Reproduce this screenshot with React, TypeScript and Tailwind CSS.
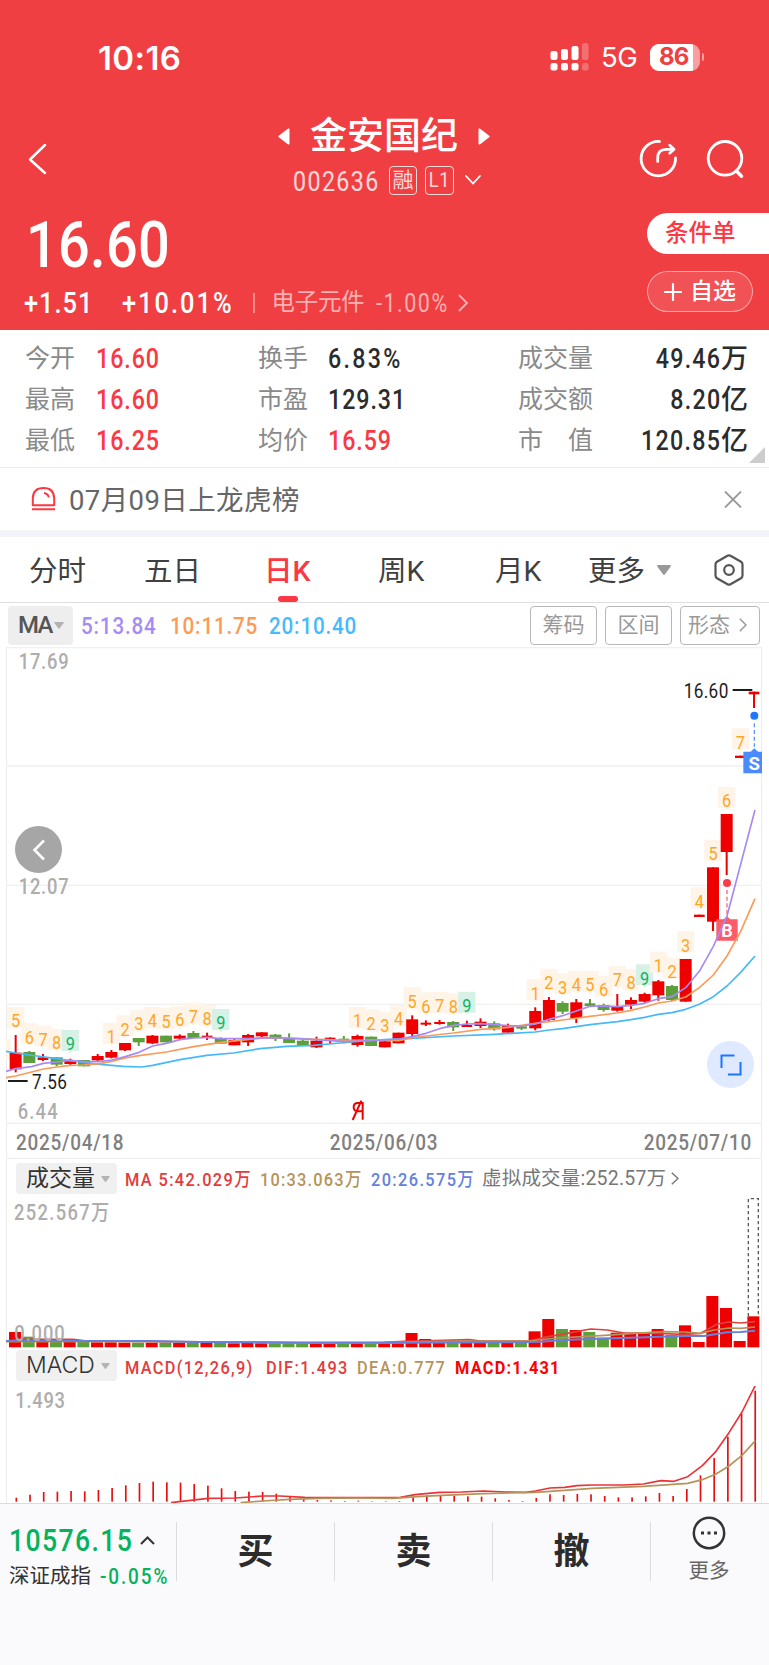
import type { ReactNode } from 'react';
import { twMerge } from 'tailwind-merge';
import clsx from 'clsx';

const UP = '#ee0000';
const DOWN = '#5c9f3a';

interface Candle {
  up: boolean;
  open: number;
  close: number;
  high: number;
  low: number;
  // top edge of the volume bar
  vol: number;
}

interface Mark {
  index: number;
  label: string;
  y: number;
}

const c = (up: number, open: number, close: number, high: number, low: number, vol: number): Candle => ({
  up: up === 1,
  open,
  close,
  high,
  low,
  vol,
});

// All the chart data is in canvas units, 3 units to a css pixel
const candles: Candle[] = [
  c(1, 458, 508, 405, 517, 546),
  c(0, 456, 489, 453, 489, 560),
  c(1, 472, 480, 462, 483, 574),
  c(0, 472, 494, 472, 498, 575),
  c(1, 483, 492, 476, 495, 576),
  c(0, 480, 499, 480, 499, 576),
  c(1, 468, 481, 462, 486, 577),
  c(1, 456, 473, 450, 475, 577),
  c(1, 429, 451, 429, 453, 578),
  c(0, 414, 427, 414, 438, 578),
  c(1, 407, 430, 405, 432, 578),
  c(0, 407, 427, 407, 427, 578),
  c(1, 407, 416, 403, 420, 579),
  c(0, 399, 414, 393, 414, 578),
  c(1, 407, 412, 398, 420, 579),
  c(0, 414, 431, 412, 431, 579),
  c(1, 420, 436, 414, 436, 580),
  c(1, 405, 427, 402, 438, 579),
  c(1, 397, 409, 397, 411, 580),
  c(0, 404, 417, 402, 423, 580),
  c(0, 416, 429, 400, 429, 580),
  c(0, 422, 438, 414, 438, 581),
  c(1, 422, 442, 410, 444, 581),
  c(1, 413, 420, 412, 432, 581),
  c(0, 416, 421, 408, 430, 581),
  c(1, 408, 435, 404, 440, 580),
  c(0, 410, 438, 410, 438, 581),
  c(1, 424, 442, 424, 442, 580),
  c(1, 398, 430, 398, 430, 580),
  c(1, 358, 402, 346, 410, 549),
  c(1, 368, 374, 361, 378, 567),
  c(1, 366, 372, 360, 374, 576),
  c(0, 366, 382, 363, 393, 576),
  c(1, 375, 381, 362, 381, 577),
  c(1, 365, 378, 355, 384, 577),
  c(0, 370, 388, 364, 392, 577),
  c(1, 376, 398, 371, 398, 578),
  c(0, 379, 386, 375, 390, 578),
  c(1, 333, 385, 322, 391, 544),
  c(1, 300, 360, 291, 365, 507),
  c(0, 309, 335, 304, 342, 537),
  c(1, 307, 354, 297, 369, 540),
  c(0, 310, 318, 297, 321, 546),
  c(0, 315, 330, 311, 335, 563),
  c(1, 320, 332, 282, 335, 548),
  c(1, 300, 314, 292, 327, 551),
  c(1, 282, 305, 278, 308, 552),
  c(1, 244, 286, 240, 302, 537),
  c(0, 258, 300, 255, 303, 555),
  c(1, 177, 305, 177, 305, 526),
  c(1, 44, 51, 44, 51, 576),
  c(1, -98, 65, -98, 93, 438),
  c(1, -258, -144, -258, -75, 474),
  c(1, -433, -426, -433, -426, 573),
  c(1, -625, -617, -625, -576, 499),
];

// The nine-turn sequence counters printed above the candles
const marks: Mark[] = [
  [-1, '4', 457], [0, '5', 361], [1, '6', 411], [2, '7', 418], [3, '8', 428], [4, '9', 431],
  [7, '1', 409], [8, '2', 387], [9, '3', 371], [10, '4', 362], [11, '5', 365], [12, '6', 359],
  [13, '7', 349], [14, '8', 355], [15, '9', 368],
  [25, '1', 362], [26, '2', 369], [27, '3', 376], [28, '4', 356], [29, '5', 303], [30, '6', 318],
  [31, '7', 316], [32, '8', 320], [33, '9', 316],
  [38, '1', 279], [39, '2', 247], [40, '3', 261], [41, '4', 253], [42, '5', 254], [43, '6', 268],
  [44, '7', 238], [45, '8', 248], [46, '9', 234],
  [47, '1', 196], [48, '2', 214], [49, '3', 135], [50, '4', 3], [51, '5', -140], [52, '6', -298], [53, '7', -474],
].map(([index, label, y]) => ({ index, label, y }) as Mark);

const MA5 =
  '18,514 47,506 95,500 130,490 170,486 211,481 252,485 300,485 335,480 376,470 417,457 458,438 499,430 540,419 581,414 622,412 663,416 740,416 820,413 900,416 990,422 1035,425 1152,420 1196,417 1237,410 1278,400 1319,386 1360,376 1402,372 1442,371 1483,374 1524,377 1565,378 1606,372 1647,358 1688,347 1729,333 1770,319 1811,318 1852,320 1893,316 1934,310 1975,296 2016,290 2057,263 2098,214 2140,139 2181,48 2222,-107 2265,-270';
const MA10 =
  '18,533 47,528 130,507 170,501 211,496 252,495 300,491 335,484 376,474 417,467 499,456 581,440 663,427 740,419 800,413 870,415 950,418 1050,421 1152,420 1196,422 1237,413 1278,408 1360,399 1442,388 1524,382 1606,370 1688,360 1770,349 1852,339 1893,331 1934,321 1975,309 2016,303 2057,291 2098,263 2140,225 2181,168 2222,94 2265,-4';
const MA20 =
  '18,454 47,459 88,465 170,476 240,486 300,493 370,499 425,501 458,496 540,479 620,466 700,459 780,446 860,439 940,436 1020,429 1100,422 1152,419 1237,415 1360,408 1483,403 1606,396 1647,390 1688,386 1770,374 1852,365 1893,359 1934,352 1975,343 2016,338 2057,328 2098,313 2140,290 2181,258 2222,217 2265,168';

const VOL5 =
  '18,573 60,568 220,568 260,573 600,576 900,578 1152,577 1212,574 1332,571 1407,569 1442,573 1592,573 1632,562 1697,551 1772,537 1822,540 1872,549 1932,549 2052,553 2102,550 2152,522 2187,516 2222,519 2265,515';
const VOL10 =
  '18,575 450,574 900,578 1152,578 1332,574 1582,573 1672,564 1802,557 1892,551 1992,545 2052,546 2102,550 2142,540 2187,534 2222,535 2265,531';
const VOL20 =
  '18,573 450,573 600,576 900,578 1152,578 1552,577 1622,575 1688,570 1792,566 1892,563 1982,560 2057,558 2112,558 2182,547 2222,546 2265,542';

const macdTops = [
  383, 374, 366, 365, 363, 364, 360, 354, 346, 339, 335, 337, 338, 342, 347, 355, 363, 365, 366, 371, 380, 388, 390,
  391, 393, 392, 393, 393, 393, 382, 376, 375, 378, 379, 380, 385, 390, 393, 384, 373, 375, 372, 373, 378, 382, 382,
  379, 369, 378, 357, 316, 264, 200, 131, 62,
];
const DIF =
  '513,398 545,394 625,385 707,384 788,378 840,378 914,382 1076,383 1201,382 1245,374 1319,367 1385,366 1451,363 1518,366 1577,367 1606,363 1650,354 1694,352 1731,347 1776,345 1871,345 1930,342 1982,332 2022,334 2063,320 2107,287 2148,244 2187,188 2226,126 2266,46';
const DEA =
  '722,398 788,393 869,388 958,385 1083,384 1179,385 1252,380 1326,376 1451,371 1606,367 1694,361 1776,355 1930,349 2063,340 2107,329 2148,312 2187,288 2226,256 2266,212';

const candleX = (i: number) => 47 + i * 41.02;

function Line({ points, color, width = 5 }: { points: string; color: string; width?: number }) {
  return <polyline points={points} fill="none" stroke={color} strokeWidth={width} strokeLinejoin="round" />;
}

// Condensed figures inside a chart, width is the drawn width
function Figure({ x, y, width, children }: { x: number; y: number; width: number; children: string }) {
  return (
    <text transform={`translate(${x} ${y}) scale(.86 1)`} textLength={width / 0.86}>
      {children}
    </text>
  );
}

// Condensed figures in the page
function Num({ children, className }: { children: ReactNode; className?: string }) {
  return (
    <span className={twMerge('inline-block origin-left scale-x-[.86] tracking-[0.04em]', className)}>{children}</span>
  );
}

function KLineChart() {
  return (
    <svg viewBox="18 -759 2268 1431" className="-mx-px block h-[477px] w-[756px]" fontFamily="Roboto, sans-serif">
      {[-757, -402, -44, 313, 670].map((y) => (
        <line key={y} x1="18" x2="2286" y1={y} y2={y} stroke="#f0f0f0" strokeWidth="4" />
      ))}
      <g fill="#adadad" fontSize="64" fontWeight="500">
        <Figure x={56} y={-692} width={150}>17.69</Figure>
        <Figure x={56} y={-17} width={150}>12.07</Figure>
        <Figure x={53} y={656} width={120}>6.44</Figure>
      </g>

      {marks.map(({ index, label, y }) => {
        const x = candleX(index);
        const nine = label === '9';
        return (
          <g key={index}>
            <path d={`M${x - 26} ${y - 41}h52v63h-20l-6 7l-6-7h-20z`} fill={nine ? '#d6f1e5' : '#fff4e8'} />
            <text
              transform={`translate(${x} ${y + 20}) scale(.86 1)`}
              textAnchor="middle"
              fontSize="57"
              fill={nine ? '#0fb264' : '#ffa525'}
            >
              {label}
            </text>
          </g>
        );
      })}

      {candles.map(({ up, open, close, high, low }, i) => {
        const x = candleX(i);
        // one-price days are drawn as a short dash
        const w = close - open < 9 ? 32 : 36;
        return (
          <g key={i} fill={up ? UP : DOWN}>
            <rect x={x - w / 2} y={open} width={w} height={close - open} />
            <rect x={x - 3} y={high} width="6" height={low - high} />
          </g>
        );
      })}

      {/* buy and sell points */}
      <g>
        <circle cx="2181" cy="-51" r="12" fill="#fa3b48" />
        <line x1="2181" x2="2181" y1="-30" y2="50" stroke="#fa6a74" strokeWidth="4" strokeDasharray="12 8" />
        <path d="M2149 58h22l10-9l10 9h22v64h-64z" fill="#fb5c67" />
        <text x="2181" y="110" textAnchor="middle" fontSize="54" fontWeight="700" fill="#fff">B</text>
        <circle cx="2263" cy="-553" r="12" fill="#1f75ff" />
        <line x1="2263" x2="2263" y1="-530" y2="-460" stroke="#5a98ff" strokeWidth="4" strokeDasharray="12 8" />
        <path d="M2230 -445h22l11-10l11 10h12v65h-56z" fill="#4a8cff" />
        <text x="2263" y="-391" textAnchor="middle" fontSize="56" fontWeight="700" fill="#fff">S</text>
      </g>

      <Line points={MA20} color="#45b9fb" />
      <Line points={MA10} color="#fb9b5a" />
      <Line points={MA5} color="#a68bf3" />

      <g fill="#1c1c1c" fontSize="60">
        <Figure x={2051} y={-606} width={134}>16.60</Figure>
        <rect x="2198" y="-633" width="59" height="6" />
        <Figure x={96} y={566} width={105}>7.56</Figure>
        <rect x="24" y="540" width="59" height="6" />
      </g>

      {/* ex-rights marker */}
      <g fill="none" stroke={UP} strokeWidth="6">
        <path d="M1088 659V606M1088 634H1072q-11-1-11-12q0-13 13-13h14M1058 660l26-58" />
      </g>
    </svg>
  );
}

function VolumeChart() {
  return (
    <svg viewBox="18 144 2268 456" className="-mx-px block h-[152px] w-[756px]" fontFamily="Roboto, 'Noto Sans CJK SC', sans-serif">
      {candles.map(({ up, vol }, i) => (
        <rect key={i} x={candleX(i) - 20} y={vol} width="36" height={592 - vol} fill={up ? UP : DOWN} />
      ))}
      <path d="M2245 499V146H2275V499" fill="none" stroke="#5a5a5a" strokeWidth="4" strokeDasharray="10 8" />
      <Line points={VOL5} color="#e0403c" />
      <Line points={VOL10} color="#b6935a" />
      <Line points={VOL20} color="#6680e0" width={6} />
      <g fill="#adadad" fontSize="64" fontWeight="500">
        <Figure x={42} y={211} width={286}>252.567万</Figure>
        <Figure x={43} y={572} width={151}>0.000</Figure>
      </g>
    </svg>
  );
}

function MacdChart() {
  return (
    <svg viewBox="18 48 2268 351" className="-mx-px block h-[117px] w-[756px]" fontFamily="Roboto, sans-serif">
      {macdTops.map((top, i) => (
        <rect
          key={i}
          x={46.5 + i * 41.05}
          y={top}
          width="5"
          height={395 - top}
          fill={i === 26 || i === 27 ? DOWN : '#e90d0d'}
        />
      ))}
      <Line points={DIF} color="#ea3338" />
      <Line points={DEA} color="#b6935a" />
      <g fill="#adadad" fontSize="64" fontWeight="500">
        <Figure x={46} y={113} width={149}>1.493</Figure>
      </g>
    </svg>
  );
}

function Caret({ className }: { className?: string }) {
  return (
    <svg viewBox="0 0 14 10" className={className} fill="currentColor">
      <path d="M1 0h12a1 1 0 0 1 .7 1.6L7.8 9.4a1 1 0 0 1-1.6 0L.3 1.6A1 1 0 0 1 1 0z" />
    </svg>
  );
}

interface QuoteProps {
  label: string;
  value: string;
  unit?: string;
  red?: boolean;
}

function Quote({ label, value, unit, red }: QuoteProps) {
  return (
    <div className={clsx('flex h-[41px] items-center', unit && 'justify-between')}>
      <span className="pt-[1px] text-[25px] text-[#8a8a8a]">{label}</span>
      <span className={clsx('flex pt-[4px] text-[27px] font-medium', red ? 'text-[#fb3843]' : 'text-[#2c2c2c]')}>
        <Num className={clsx(unit && 'origin-right tracking-[0.055em]', value.endsWith('%') && 'tracking-[0.1em]')}>
          {value}
        </Num>
        {unit}
      </span>
    </div>
  );
}

function IndicatorPill({ children }: { children: ReactNode }) {
  return (
    <div className="flex h-[31px] w-[101px] shrink-0 items-center justify-between rounded bg-[#f0f0f0] pr-[7px] pl-[10px] text-[23px] text-[#333]">
      {children}
      <Caret className="h-[6px] w-[9px] text-[#b3b3b3]" />
    </div>
  );
}

function Header() {
  return (
    <header className="h-[330px] bg-[#f03f42] text-white">
      {/* status bar */}
      <div className="flex h-[114px] items-center pl-[98px]">
        <span className="w-[452px] pt-[2px] font-[Inter] text-[33px] font-semibold tracking-[0.4px]">10:16</span>
        <svg className="h-[28px] w-[39px]" viewBox="0 0 39 28" fill="#fff">
          <rect x="0.5" y="8" width="7" height="9" rx="2.2" />
          <rect x="11" y="6" width="7" height="11" rx="2.2" />
          <rect x="21.5" y="3" width="7" height="14" rx="2.2" />
          <rect x="0.5" y="20" width="7" height="7.5" rx="2.2" />
          <rect x="11" y="20" width="7" height="7.5" rx="2.2" />
          <rect x="21.5" y="20" width="7" height="7.5" rx="2.2" />
          <rect x="32" y="0" width="6.5" height="17" rx="2.2" opacity=".25" />
          <rect x="32" y="20" width="6.5" height="7.5" rx="2.2" opacity=".25" />
        </svg>
        <span className="ml-[12px] w-[49px] pt-[2px] font-[Inter] text-[27.500px] tracking-[-0.4px]">5G</span>
        <div className="relative flex h-[27px] w-[50px] items-center overflow-hidden rounded-[9px] bg-white/50 pl-[9px]">
          <div className="absolute inset-y-0 left-0 w-[43px] bg-white" />
          <span className="relative font-[Inter] text-[24px] font-bold tracking-[-0.8px] text-[#f03f42]">86</span>
        </div>
        <div className="ml-[2px] h-[8px] w-[2px] rounded-r bg-white/50" />
      </div>

      {/* title row */}
      <div className="flex h-[92px] items-start pr-[24px] pl-[28px]">
        <svg className="mt-[28px] h-[34px] w-[20px]" viewBox="0 0 20 34" fill="none" stroke="#fff" strokeWidth="2.5" strokeLinecap="round" strokeLinejoin="round">
          <path d="M17 3L2 17.500L17 31" />
        </svg>
        <div className="ml-[230px] flex w-[212px] flex-col items-center">
          <div className="flex h-[44px] w-full items-center justify-between">
            <svg className="h-[17px] w-[12px]" viewBox="0 0 12 17" fill="#fff">
              <path d="M11.500 1.500v14a1 1 0 0 1-1.700.700L.8 9.300a1 1 0 0 1 0-1.500L9.800.800a1 1 0 0 1 1.700.700z" />
            </svg>
            <h1 className="text-[37px] leading-none font-medium">金安国纪</h1>
            <svg className="h-[17px] w-[12px]" viewBox="0 0 12 17" fill="#fff">
              <path d="M.5 1.500v14a1 1 0 0 0 1.700.700L11.200 9.300a1 1 0 0 0 0-1.500L2.200.800a1 1 0 0 0-1.700.700z" />
            </svg>
          </div>
          <div className="mt-[7px] flex h-[30px] w-full items-center pl-[15px] text-white/80">
            <span className="w-[96px] shrink-0 pt-[4px] text-[27px]">
              <Num className="tracking-[0.06em]">002636</Num>
            </span>
            <span className="flex h-[29px] w-[28px] shrink-0 items-center justify-center rounded border-[1.5px] border-white/80 text-[21px]">融</span>
            <span className="ml-[8px] flex h-[29px] w-[29px] shrink-0 items-center justify-center rounded border-[1.5px] border-white/80 text-[21px]">
              <Num className="origin-center">L1</Num>
            </span>
            <svg className="ml-[11px] h-[10px] w-[16px] shrink-0" viewBox="0 0 16 10" fill="none" stroke="#fff" strokeWidth="1.800" strokeLinecap="round">
              <path d="M1 1l7 7.500L15 1" />
            </svg>
          </div>
        </div>
        <div className="ml-auto flex gap-[27px] pt-[24px]">
          <svg className="h-[40px] w-[40px]" viewBox="0 0 40 40" fill="none" stroke="#fff" strokeWidth="2.800" strokeLinecap="round" strokeLinejoin="round">
            <path d="M21.500 3.500A17.200 17.200 0 1 0 37.500 20" />
            <path d="M19.700 23.500V20Q19.700 11.300 28 11.300H35.500" />
            <path d="M31.700 7.300L36 11.300L31.700 15.300" />
          </svg>
          <svg className="h-[40px] w-[40px]" viewBox="0 0 40 40" fill="none" stroke="#fff" strokeWidth="2.800" strokeLinecap="round">
            <circle cx="20" cy="20.300" r="16.800" />
            <path d="M31.500 33L36.500 38.200" strokeWidth="3.400" />
          </svg>
        </div>
      </div>

      {/* price and actions */}
      <div className="flex h-[124px] justify-between">
        <div className="pl-[24px]">
          <div className="h-[76px] pl-[2px] text-[65px] leading-[79px] font-medium">
            <Num className="tracking-[0.005em]">16.60</Num>
          </div>
          <div className="flex h-[42px] items-center text-[29.500px] font-medium">
            <span className="w-[98px] pt-[2px]">
              <Num>+1.51</Num>
            </span>
            <span className="w-[131px] pt-[2px]">
              <Num className="tracking-[0.08em]">+10.01%</Num>
            </span>
            <div className="h-[20px] w-[1.5px] bg-white/40" />
            <div className="flex items-center pl-[17px] text-[23.500px] font-normal text-white/60">
              <span className="w-[104px] tracking-[-0.3px]">电子元件</span>
              <span className="w-[82px] pt-px text-[25px]">
                <Num className="tracking-[0.07em]">-1.00%</Num>
              </span>
              <svg className="h-[18px] w-[10px]" viewBox="0 0 10 18" fill="none" stroke="currentColor" strokeWidth="1.800">
                <path d="M1 1l8 8l-8 8" />
              </svg>
            </div>
          </div>
        </div>
        <div className="flex flex-col items-end gap-[17px] pt-[7px]">
          <button className="h-[41px] w-[122px] rounded-l-full bg-white pl-[18px] text-left text-[23.500px] font-medium text-[#fb3843]">
            条件单
          </button>
          <button className="mr-[16px] flex h-[41px] w-[106px] items-center rounded-full border-[1.500px] border-white/50 bg-white/10 pl-[16px] text-[23px] font-medium">
            <svg className="mr-[8px] h-[18px] w-[18px]" viewBox="0 0 18 18" stroke="#fff" strokeWidth="2.200" strokeLinecap="round">
              <path d="M1 9h16M9 1v16" />
            </svg>
            自选
          </button>
        </div>
      </div>
    </header>
  );
}

function Tabs() {
  return (
    <nav className="flex h-[66px] items-center border-b-[1.500px] border-[#dedede] pl-[29px] text-[28.500px] text-[#404040] [&>span]:pt-[5px]">
      <span className="w-[115px]">分时</span>
      <span className="w-[120px]">五日</span>
      <span className="relative flex h-full w-[114px] items-center font-medium text-[#fb3843]">
        日K
        <i className="absolute bottom-0 left-[14px] h-[6px] w-[20px] rounded-full bg-[#fb3843]" />
      </span>
      <span className="w-[117px]">周K</span>
      <span className="w-[93px]">月K</span>
      <span className="w-[69px]">更多</span>
      <Caret className="h-[10px] w-[14px] text-[#999]" />
      <svg className="ml-[43px] h-[32px] w-[30px]" viewBox="0 0 30 32" fill="none" stroke="#555" strokeWidth="2.200" strokeLinejoin="round">
        <path d="M13.500 1.800a3 3 0 0 1 3 0L27 7.800a3 3 0 0 1 1.500 2.600v11.200a3 3 0 0 1-1.500 2.600L16.500 30.200a3 3 0 0 1-3 0L3 24.200a3 3 0 0 1-1.500-2.600V10.400A3 3 0 0 1 3 7.800z" />
        <circle cx="15" cy="16" r="4.800" />
      </svg>
    </nav>
  );
}

export default function App() {
  return (
    <div className="h-[1665px] w-[769px] overflow-hidden bg-white font-[Roboto,'Noto_Sans_CJK_SC',sans-serif] leading-none whitespace-nowrap">
      <Header />

      <section className="relative flex h-[138px] border-b-[1.500px] border-[#ececec] pt-[7px] pl-[25px]">
        <div className="w-[233px] [&>div>span:first-child]:w-[71px]">
          <Quote label="今开" value="16.60" red />
          <Quote label="最高" value="16.60" red />
          <Quote label="最低" value="16.25" red />
        </div>
        <div className="w-[260px] [&>div>span:first-child]:w-[70px]">
          <Quote label="换手" value="6.83%" />
          <Quote label="市盈" value="129.31" />
          <Quote label="均价" value="16.59" red />
        </div>
        <div className="w-[230px]">
          <Quote label="成交量" value="49.46" unit="万" />
          <Quote label="成交额" value="8.20" unit="亿" />
          <Quote label="市　值" value="120.85" unit="亿" />
        </div>
        <svg className="absolute right-[4px] bottom-[4px] h-[16px] w-[16px]" viewBox="0 0 16 16" fill="#ccc">
          <path d="M16 0v16H0z" />
        </svg>
      </section>

      <section className="flex h-[69px] items-center border-b-[7px] border-[#f3f4f9] pr-[27px] pl-[31px]">
        <svg className="h-[24px] w-[25px]" viewBox="0 0 25 24" fill="none" stroke="#fb3843" strokeWidth="2" strokeLinejoin="round">
          <path d="M1.800 18.300V11.500Q2 1 12.500 1T23.200 11.500V18.300zM1 22.200h23M13 6q4.200 .8 4.800 4.500" />
        </svg>
        <p className="ml-[13px] flex-1 pt-[4px] text-[27.500px] tracking-[0.400px] text-[#666]">07月09日上龙虎榜</p>
        <svg className="h-[17px] w-[18px]" viewBox="0 0 18 17" stroke="#999" strokeWidth="1.800">
          <path d="M1 .5l16 16M17 .5l-16 16" />
        </svg>
      </section>

      <Tabs />

      {/* moving averages */}
      <div className="flex h-[44px] items-center pr-[9px] pl-[8px] text-[24px]">
        <div className="flex h-[39px] w-[65px] items-center gap-[2px] rounded bg-[#eee] pl-[10px] text-[#555]">
          <span className="font-medium tracking-[-1.800px]">MA</span>
          <Caret className="h-[7px] w-[10px] shrink-0 text-[#b3b3b3]" />
        </div>
        <div className="flex pt-[1px] pl-[8px] font-medium">
          <span className="w-[89px] text-[#a78bf5]">
            <Num>5:13.84</Num>
          </span>
          <span className="w-[99px] text-[#fd9a55]">
            <Num>10:11.75</Num>
          </span>
          <span className="w-[99px] text-[#45baff]">
            <Num>20:10.40</Num>
          </span>
        </div>
        <div className="ml-auto flex gap-[8px] text-[21px] text-[#999]">
          <button className="h-[39px] w-[67px] rounded border-[1.500px] border-[#b8b8b8]">筹码</button>
          <button className="h-[39px] w-[67px] rounded border-[1.500px] border-[#b8b8b8]">区间</button>
          <button className="flex h-[39px] w-[80px] items-center justify-between rounded border-[1.500px] border-[#b8b8b8] pr-[12px] pl-[7px]">
            形态
            <svg className="h-[14px] w-[8px]" viewBox="0 0 8 14" fill="none" stroke="currentColor" strokeWidth="1.500">
              <path d="M.8.800l6.200 6.200l-6.200 6.200" />
            </svg>
          </button>
        </div>
      </div>

      <main className="relative ml-[6px] h-[856px] w-[756px] border-x border-[#ececec]">
        <KLineChart />
        <div className="flex h-[35px] items-center justify-between border-b border-[#ececec] pr-[9px] pl-[9px] pt-[3px] text-[22px] font-medium text-[#808080]">
          <Num>2025/04/18</Num>
          <Num className="origin-center">2025/06/03</Num>
          <Num className="origin-right">2025/07/10</Num>
        </div>
        <div className="flex h-[39px] items-center pl-[9px] text-[19px]">
          <IndicatorPill>成交量</IndicatorPill>
          <span className="ml-[8px] w-[135px] pt-px font-medium text-[#e43c3c]">
            <Num className="tracking-[0.085em]">MA 5:42.029万</Num>
          </span>
          <span className="w-[111px] pt-px font-medium text-[#b6935a]">
            <Num className="tracking-[0.075em]">10:33.063万</Num>
          </span>
          <span className="w-[111px] pt-px font-medium text-[#6680e0]">
            <Num className="tracking-[0.085em]">20:26.575万</Num>
          </span>
          <span className="w-[189px] pt-px text-[19.500px] tracking-[0.2px] text-[#777]">虚拟成交量:252.57万</span>
          <svg className="h-[13px] w-[8px]" viewBox="0 0 8 13" fill="none" stroke="#777" strokeWidth="1.500">
            <path d="M.8.800l6.200 5.700l-6.200 5.700" />
          </svg>
        </div>
        <VolumeChart />
        <div className="flex h-[36px] items-start pl-[9px] text-[19px]">
          <IndicatorPill>
            <span className="font-[Inter] font-light">MACD</span>
          </IndicatorPill>
          <div className="ml-[8px] flex h-[34px] items-center font-medium text-[#e43c3c]">
            <span className="w-[141px]">
              <Num className="tracking-[0.08em]">MACD(12,26,9)</Num>
            </span>
            <span className="w-[91px]">
              <Num className="tracking-[0.085em]">DIF:1.493</Num>
            </span>
            <span className="w-[98px] text-[#b6935a]">
              <Num className="tracking-[0.085em]">DEA:0.777</Num>
            </span>
            <span className="font-bold text-[#f00]">
              <Num className="tracking-[0.075em]">MACD:1.431</Num>
            </span>
          </div>
        </div>
        <MacdChart />

        {/* floating controls */}
        <button className="absolute top-[179px] left-[8px] flex size-[47px] items-center justify-center rounded-full bg-[#a6a6a6]">
          <svg className="h-[22px] w-[14px]" viewBox="0 0 14 22" fill="none" stroke="#fff" strokeWidth="2.500">
            <path d="M12 1.500L2.500 11l9.500 9.500" />
          </svg>
        </button>
        <button className="absolute top-[394px] left-[700px] flex size-[47px] items-center justify-center rounded-full bg-[#dfe9ff]">
          <svg className="size-[22px]" viewBox="0 0 22 22" fill="none" stroke="#1f75ff" strokeWidth="2">
            <path d="M1.500 14V1.500H14.500M20.500 8V20.500H8" />
          </svg>
        </button>
      </main>

      <footer className="flex h-[162px] items-start border-t-[1.500px] border-[#dcdcde] bg-[#fafafc] pt-[12px]">
        <div className="w-[176px] pt-[9px] pl-[9px]">
          <div className="flex items-center text-[31px] font-medium text-[#06b25c]">
            <span className="w-[131px]">
              <Num className="tracking-[0.05em]">10576.15</Num>
            </span>
            <svg className="h-[9px] w-[15px] shrink-0" viewBox="0 0 15 9" fill="none" stroke="#333" strokeWidth="2">
              <path d="M1 8l6.500-6.500L14 8" />
            </svg>
          </div>
          <div className="mt-[8px] flex items-center text-[20.500px] text-[#333]">
            深证成指
            <span className="ml-[9px] pt-[2px] text-[22px] font-medium text-[#06b25c]">
              <Num className="tracking-[0.1em]">-0.05%</Num>
            </span>
          </div>
        </div>
        {['买', '卖', '撤'].map((name) => (
          <button key={name} className="mt-[6px] flex h-[59px] w-[158px] items-center justify-center border-l border-[#dcdcde] text-[36px] font-bold text-[#2c2c2c]">
            {name}
          </button>
        ))}
        <div className="mt-[6px] flex h-[59px] flex-1 flex-col items-center border-l border-[#dcdcde] pr-[2px]">
          <svg className="-mt-[6px] h-[34px] w-[34px] shrink-0" viewBox="0 0 34 34" fill="none" stroke="#333" strokeWidth="2.500">
            <circle cx="17" cy="17" r="15.200" />
            <path d="M9 17h3M15.500 17h3M22 17h3" stroke="#333" strokeWidth="3" />
          </svg>
          <span className="mt-[11px] text-[20.500px] text-[#666]">更多</span>
        </div>
      </footer>
    </div>
  );
}
